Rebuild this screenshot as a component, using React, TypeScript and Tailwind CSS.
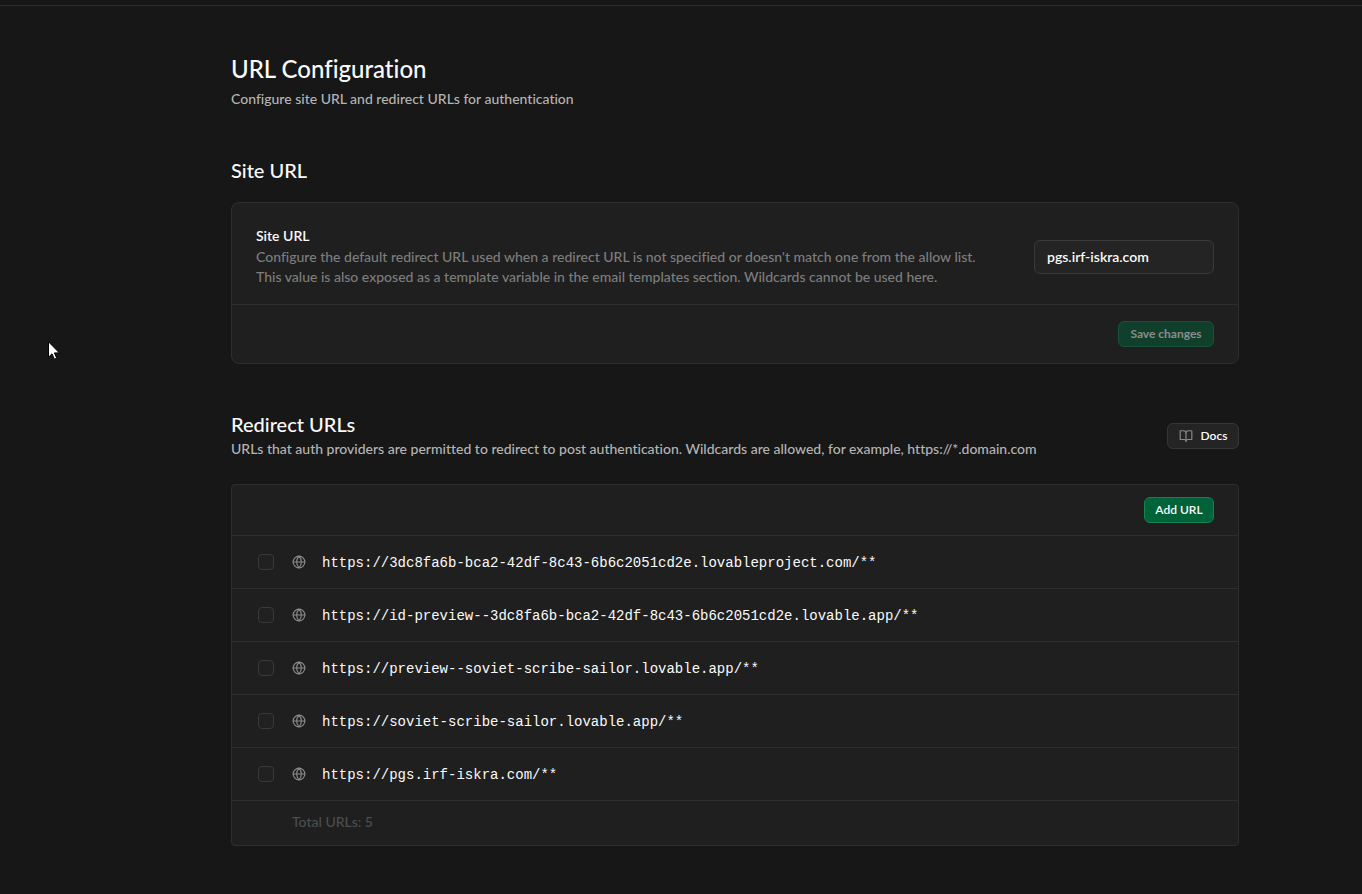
import { useState } from 'react';
import { BookOpen, Globe } from 'lucide-react';

const REDIRECT_URLS = [
  'https://3dc8fa6b-bca2-42df-8c43-6b6c2051cd2e.lovableproject.com/**',
  'https://id-preview--3dc8fa6b-bca2-42df-8c43-6b6c2051cd2e.lovable.app/**',
  'https://preview--soviet-scribe-sailor.lovable.app/**',
  'https://soviet-scribe-sailor.lovable.app/**',
  'https://pgs.irf-iskra.com/**',
];

const SAVED_SITE_URL = 'pgs.irf-iskra.com';

const SiteUrlForm = () => {
  const [siteUrl, setSiteUrl] = useState(SAVED_SITE_URL);
  const isDirty = siteUrl !== SAVED_SITE_URL;

  return (
    <section className="mt-[47px]">
      <h2 className="text-xl leading-7 font-medium">Site URL</h2>
      <form
        className="mt-[18px] rounded-lg border border-[#2e2e2e] bg-[#1f1f1f]"
        onSubmit={(e) => e.preventDefault()}
      >
        <div className="flex items-center justify-between gap-8 px-6 pt-[23px] pb-[17px]">
          <div className="text-sm leading-5">
            <label htmlFor="site-url" className="block font-semibold">
              Site URL
            </label>
            <p className="mt-px font-medium text-[#7d7d7d]">
              Configure the default redirect URL used when a redirect URL is not specified or doesn't match one from the allow list.
              This value is also exposed as a template variable in the email templates section. Wildcards cannot be used here.
            </p>
          </div>
          <input
            id="site-url"
            type="text"
            value={siteUrl}
            onChange={(e) => setSiteUrl(e.target.value)}
            className="h-[34px] w-[180px] shrink-0 rounded-md border border-[#393939] bg-[#242424] px-3 text-sm font-semibold text-[#fafafa] outline-none"
          />
        </div>
        <div className="flex justify-end border-t border-[#2e2e2e] px-6 py-4">
          <button
            type="submit"
            disabled={!isDirty}
            className="h-[26px] w-24 rounded-md border border-[#16533a] bg-[#10402b] text-xs font-bold text-[#8c8c8c]"
          >
            Save changes
          </button>
        </div>
      </form>
    </section>
  );
};

const RedirectUrls = () => {
  const [selected, setSelected] = useState<string[]>([]);

  const toggle = (url: string) => {
    setSelected((prev) => (prev.includes(url) ? prev.filter((u) => u !== url) : [...prev, url]));
  };

  return (
    <section className="mt-[46px]">
      <div className="flex items-end justify-between gap-4">
        <div>
          <h2 className="text-xl leading-7 font-medium">Redirect URLs</h2>
          <p className="mt-px text-sm leading-5 font-medium text-[#b4b4b4]">
            URLs that auth providers are permitted to redirect to post authentication. Wildcards are allowed, for example, https://*.domain.com
          </p>
        </div>
        <a
          href="#docs"
          className="mb-2.5 flex h-[26px] w-[72px] shrink-0 items-center justify-center gap-2 rounded-md border border-[#363636] bg-[#242424] text-xs font-semibold"
        >
          <BookOpen size={14} strokeWidth={2} className="text-[#898989]" />
          Docs
        </a>
      </div>

      <div className="mt-[25px] rounded-sm border border-[#2e2e2e] bg-[#1f1f1f]">
        <div className="flex justify-end px-6 py-3">
          <button
            type="button"
            className="h-[26px] w-[70px] rounded-md border border-[#128353] bg-[#006239] text-xs font-semibold"
          >
            Add URL
          </button>
        </div>
        <ul>
          {REDIRECT_URLS.map((url, i) => (
            <li key={url} className="border-t border-[#2e2e2e]">
              <label htmlFor={`url-${i}`} className="flex h-[52px] items-center px-[26px]">
                <input
                  id={`url-${i}`}
                  type="checkbox"
                  checked={selected.includes(url)}
                  onChange={() => toggle(url)}
                  className="size-4 appearance-none rounded-sm border border-[#393939] bg-[#212121] checked:bg-[#3ecf8e]"
                />
                <Globe size={14} strokeWidth={2} className="ml-[18px] text-[#898989]" />
                <span className="ml-4 pt-0.5 font-['Liberation_Mono',monospace] text-sm">{url}</span>
              </label>
            </li>
          ))}
        </ul>
        <p className="border-t border-[#2e2e2e] pt-[11px] pb-[13px] pl-[60px] text-sm leading-5 font-medium text-[#4d4d4d]">
          Total URLs: {REDIRECT_URLS.length}
        </p>
      </div>
    </section>
  );
};

const Cursor = () => (
  <svg
    className="pointer-events-none absolute top-[341px] left-[48px]"
    width="12"
    height="19"
    viewBox="0 0 12 19"
    aria-hidden="true"
  >
    <path d="M.5.8v15.4l3.5-3.4 2.4 5.4 2.3-1-2.3-5.3h5L.5.8Z" fill="#fff" stroke="#000" strokeWidth="1" />
  </svg>
);

const App = () => {
  return (
    <div className="relative min-h-screen bg-[#171717] font-['Lato',sans-serif] text-[#fafafa] [font-variant-ligatures:none]">
      <header className="h-[6px] border-b border-[#2e2e2e]" />
      <main className="pt-[47px] pb-12 pl-[108px]">
        <div className="mx-auto w-full max-w-[1008px]">
          <h1 className="text-2xl leading-8 font-medium">URL Configuration</h1>
          <p className="mt-1 text-sm leading-5 font-medium text-[#b4b4b4]">
            Configure site URL and redirect URLs for authentication
          </p>
          <SiteUrlForm />
          <RedirectUrls />
        </div>
      </main>
      <Cursor />
    </div>
  );
};

export default App;
